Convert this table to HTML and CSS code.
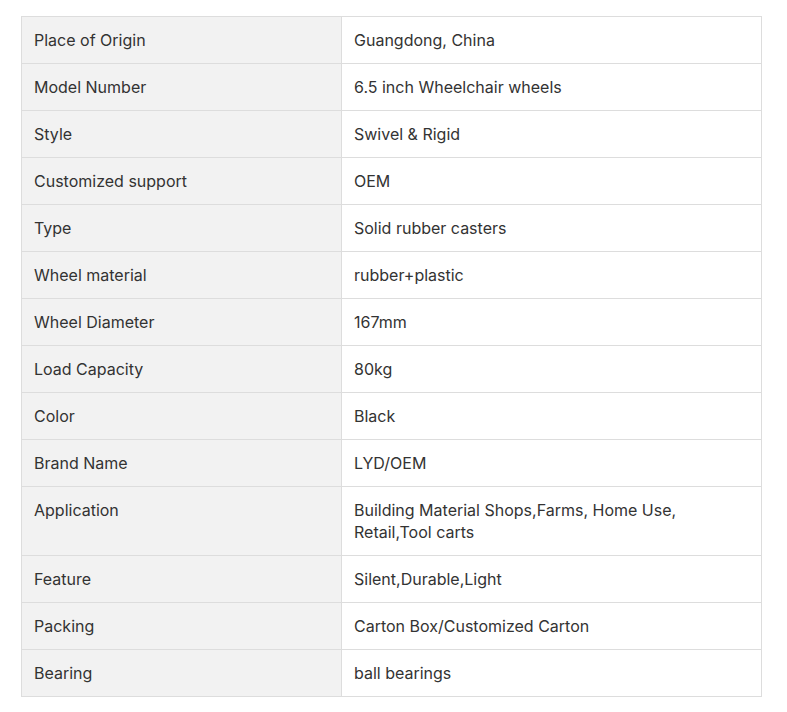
FILE: index.html
```html
<!DOCTYPE html>
<html>
<head>
<meta charset="utf-8">
<link rel="stylesheet" href="styles.css">
</head>
<body>
<div class="wrap">
<table class="spec">
<tbody>
<tr><td class="k">Place of Origin</td><td class="v">Guangdong, China</td></tr>
<tr><td class="k">Model Number</td><td class="v">6.5 inch Wheelchair wheels</td></tr>
<tr><td class="k">Style</td><td class="v">Swivel &amp; Rigid</td></tr>
<tr><td class="k">Customized support</td><td class="v">OEM</td></tr>
<tr><td class="k">Type</td><td class="v">Solid rubber casters</td></tr>
<tr><td class="k">Wheel material</td><td class="v">rubber+plastic</td></tr>
<tr><td class="k">Wheel Diameter</td><td class="v">167mm</td></tr>
<tr><td class="k">Load Capacity</td><td class="v">80kg</td></tr>
<tr><td class="k">Color</td><td class="v">Black</td></tr>
<tr><td class="k">Brand Name</td><td class="v">LYD/OEM</td></tr>
<tr><td class="k">Application</td><td class="v">Building Material Shops,Farms, Home Use,<br>Retail,Tool carts</td></tr>
<tr><td class="k">Feature</td><td class="v">Silent,Durable,Light</td></tr>
<tr><td class="k">Packing</td><td class="v">Carton Box/Customized Carton</td></tr>
<tr><td class="k">Bearing</td><td class="v">ball bearings</td></tr>
</tbody>
</table>
</div>
</body>
</html>
```
FILE: styles.css
```css
html, body {
  margin: 0;
  padding: 0;
  background: #ffffff;
}
.wrap {
  padding: 16px 0 0 21px;
}
.spec {
  border-collapse: collapse;
  width: 741px;
  font-family: Inter, "Noto Sans", sans-serif;
  font-size: 16px;
  line-height: 22px;
  color: #333333;
}
.spec td {
  border: 1px solid #dddddd;
  padding: 12px 12px;
  vertical-align: top;
  text-align: left;
}
.spec td.k {
  width: 295px;
  background: #f2f2f2;
}
.spec td.v {
  background: #ffffff;
}
```
